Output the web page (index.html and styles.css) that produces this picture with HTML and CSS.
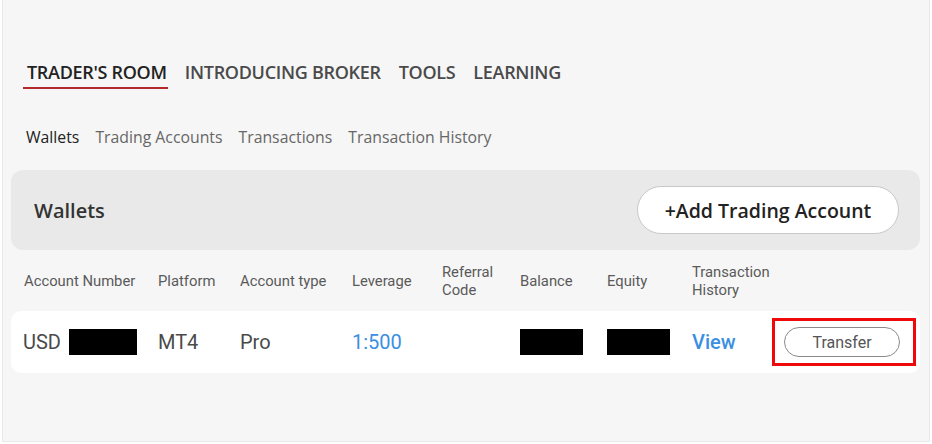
FILE: index.html
```html
<!DOCTYPE html>
<html>

<head>
    <meta charset="utf-8">
    <title>Trader's Room - Wallets</title>
    <meta name="viewport" content="width=device-width, initial-scale=1">
    <link rel="stylesheet" href="styles.css">
</head>

<body>
    <div class="page">
        <ul class="main-nav">
            <li class="active">TRADER'S ROOM</li>
            <li>INTRODUCING BROKER</li>
            <li>TOOLS</li>
            <li>LEARNING</li>
        </ul>

        <ul class="sub-nav">
            <li class="active">Wallets</li>
            <li>Trading Accounts</li>
            <li>Transactions</li>
            <li>Transaction History</li>
        </ul>

        <div class="panel">
            <h2 class="panel-title">Wallets</h2>
            <button class="add-btn">+Add Trading Account</button>
        </div>

        <!-- wallets table -->
        <div class="table-head">
            <div>Account Number</div>
            <div>Platform</div>
            <div>Account type</div>
            <div>Leverage</div>
            <div>Referral<br>Code</div>
            <div>Balance</div>
            <div>Equity</div>
            <div>Transaction<br>History</div>
            <div></div>
        </div>

        <div class="table-row">
            <div class="acc">USD <span class="hidden acc-num"></span></div>
            <div>MT4</div>
            <div>Pro</div>
            <div class="blue">1:500</div>
            <div></div>
            <div><span class="hidden"></span></div>
            <div><span class="hidden"></span></div>
            <div class="blue view">View</div>
            <div class="action">
                <button class="transfer-btn">Transfer</button>
            </div>
        </div>
    </div>
</body>

</html>
```

FILE: styles.css
```css
body {
    margin: 0;
    background-color: #ffffff;
}

.page {
    margin: 0 2px;
    height: 441px;
    background-color: #f6f6f6;
    border: 1px solid #e9e9e9;
    border-top: none;
    padding: 0 9px 0 8px;
    overflow: hidden;
}

ul {
    list-style: none;
    margin: 0;
    padding: 0;
}

.main-nav {
    display: flex;
    gap: 13px;
    margin-top: 60px;
    padding-left: 12px;
    font-family: "Open Sans", sans-serif;
    font-weight: 600;
    font-size: 18px;
    font-stretch: 92%;
    letter-spacing: -0.3px;
    color: #4a4a4a;
}

.main-nav li {
    line-height: 24px;
    padding: 0 1px 3px 4px;
    border-bottom: 2px solid transparent;
}

.main-nav li.active {
    color: #222222;
    border-bottom-color: #b3282d;
}

.sub-nav {
    display: flex;
    gap: 16px;
    margin-top: 38px;
    padding-left: 15px;
    font-family: "Open Sans", sans-serif;
    font-size: 15.8px;
    line-height: 20px;
    color: #666666;
}

.sub-nav li.active {
    color: #222222;
}

.panel {
    margin-top: 23px;
    height: 80px;
    background-color: #e9e9e9;
    border-radius: 12px;
    display: flex;
    align-items: center;
    justify-content: space-between;
    padding: 0 21px 0 23px;
    box-sizing: border-box;
}

.panel-title {
    margin: 0;
    font-family: "Open Sans", sans-serif;
    font-weight: 600;
    font-size: 20px;
    color: #333333;
}

.add-btn {
    height: 48px;
    width: 262px;
    border-radius: 24px;
    background-color: #ffffff;
    border: 1px solid #c8c8c8;
    font-family: "Open Sans", sans-serif;
    font-weight: 600;
    font-size: 19.5px;
    color: #222222;
    cursor: pointer;
}

.table-head,
.table-row {
    display: grid;
    grid-template-columns: 134px 82px 112px 90px 78px 87px 85px 80px 144px;
    align-items: center;
    padding-left: 13px;
}

.table-head {
    height: 61px;
    font-family: Roboto, sans-serif;
    font-size: 14.8px;
    line-height: 18px;
    color: #5a5a5a;
}

.table-row {
    height: 62px;
    background-color: #ffffff;
    border-radius: 10px;
    font-family: Roboto, sans-serif;
    font-size: 20px;
    color: #4a4a4a;
}

.acc {
    display: flex;
    align-items: center;
    gap: 8px;
    margin-left: -1px;
}

.hidden {
    display: inline-block;
    width: 63px;
    height: 26px;
    background-color: #000000;
    vertical-align: middle;
}

.acc-num {
    width: 68px;
}

.blue {
    color: #3b8fe2;
}

.view {
    font-weight: 500;
}

.action {
    height: 48px;
    border: 3px solid #ee0a0a;
    box-sizing: border-box;
    display: flex;
    align-items: center;
    justify-content: center;
    padding-right: 4px;
}

.transfer-btn {
    width: 116px;
    height: 30px;
    border-radius: 15px;
    border: 1.5px solid #8a8a8a;
    background-color: #ffffff;
    font-family: Roboto, sans-serif;
    font-size: 16px;
    color: #555555;
    cursor: pointer;
}
```
